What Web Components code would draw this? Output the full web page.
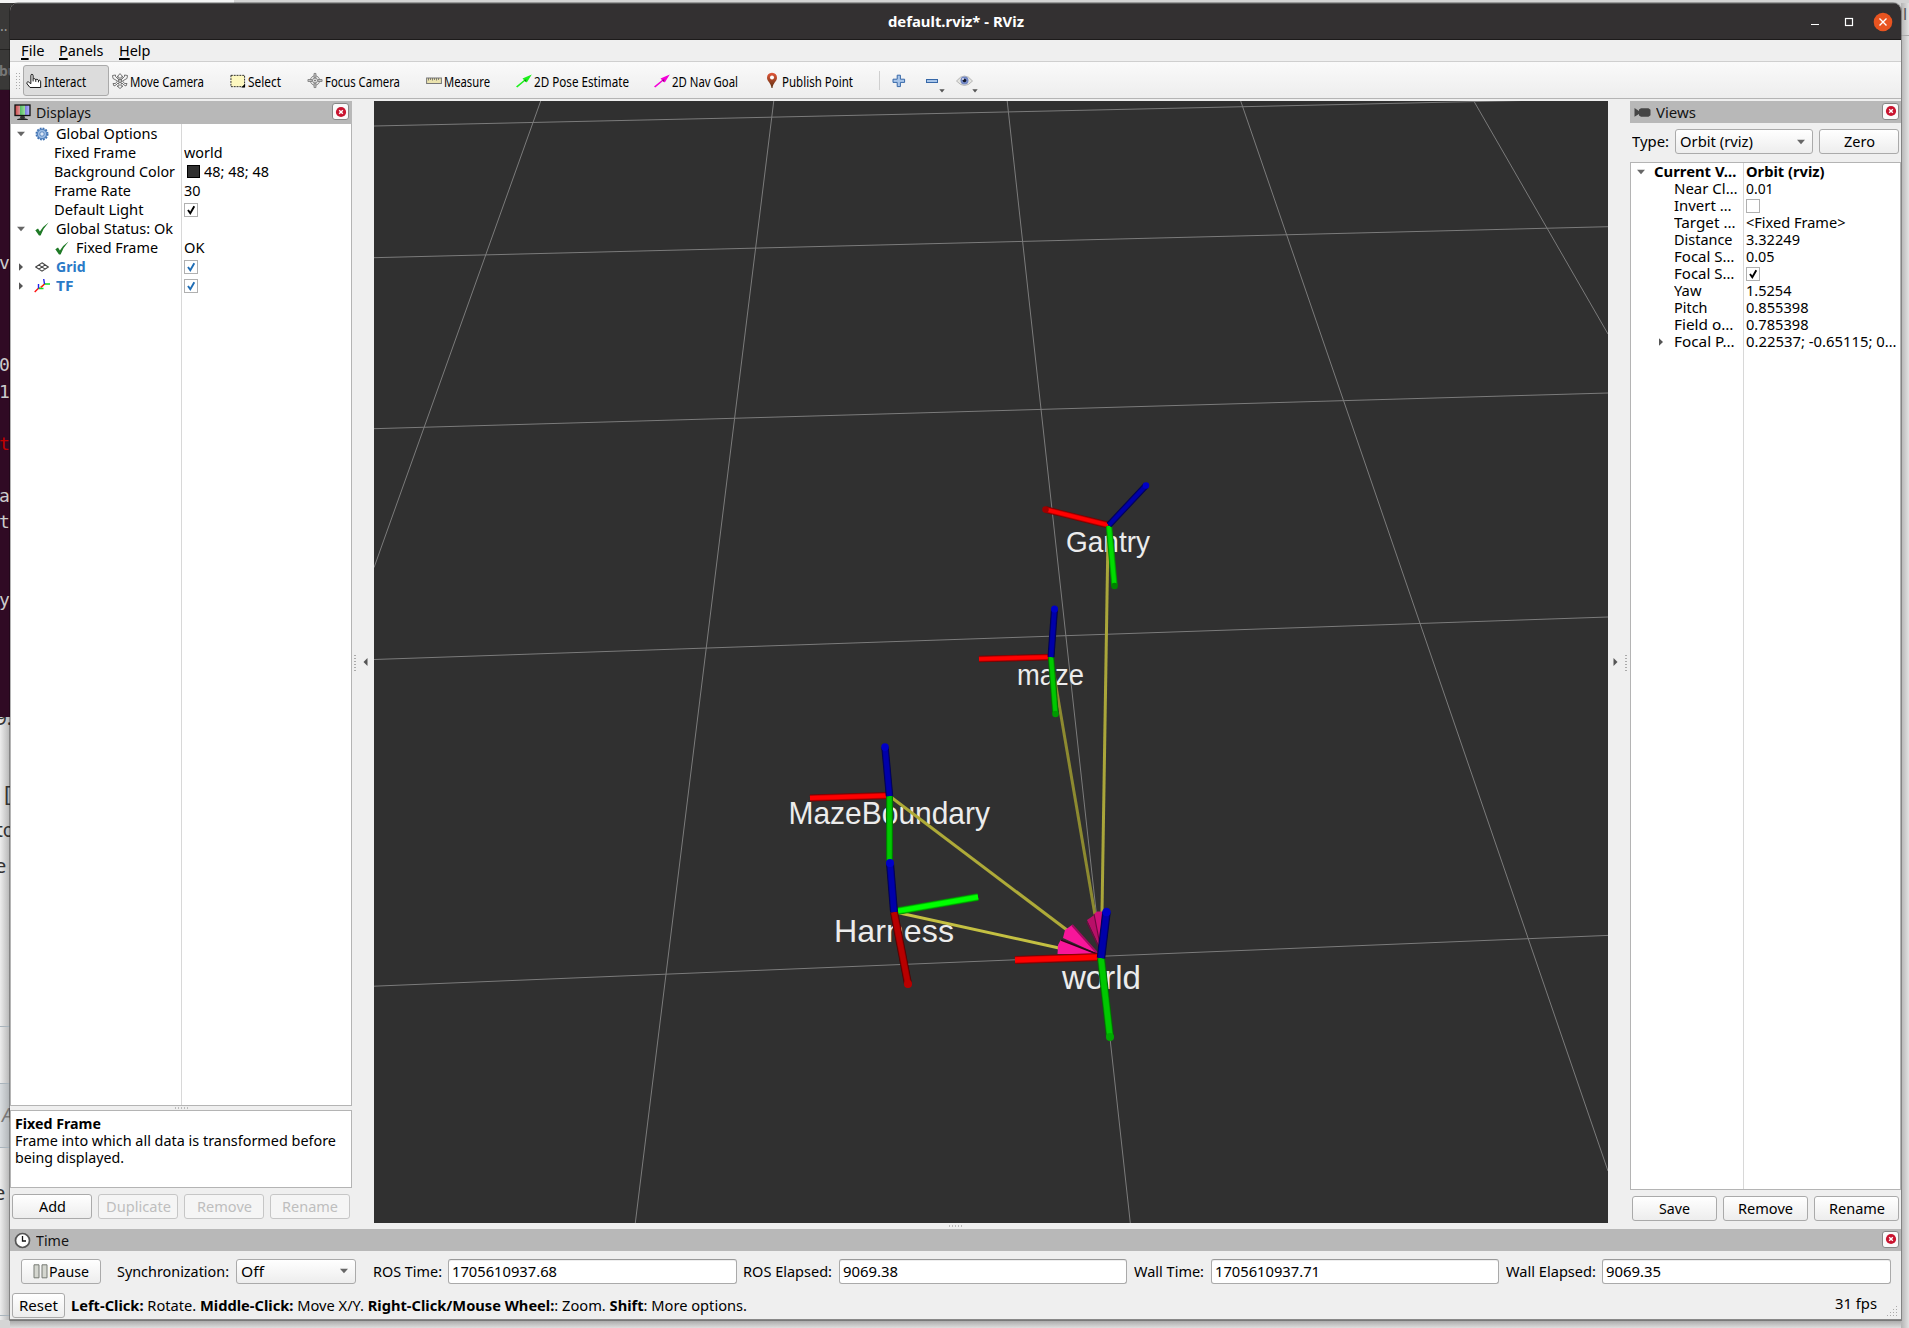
<!DOCTYPE html>
<html lang="en"><head><meta charset="utf-8"><title>default.rviz* - RViz</title>
<style>
html,body{margin:0;height:100%}
body{width:1909px;height:1328px;overflow:hidden;position:relative;font:14.4px/19px "Noto Sans",sans-serif;color:#000;background:#d3d3d3}
</style></head><body>
<desk-backdrop></desk-backdrop>
<rviz-window></rviz-window>
<script>
const ICONS={
hand:`<svg width="18" height="18" viewBox="0 0 18 18"><path d="M5.5 12V3.2Q5.500 1.400 6.700 1.400T8 3.200V7q.3-.8 1.500-.6T11 7.700q.4-.9 1.500-.6T14 8.500q.5-.6 1.500-.3T16.500 9.800V16.300H4.500L1.200 12.200Q.4 10.500 1.700 10.100T3.800 10.800L5.500 12M8 7V9.500M11 7.700V10M14 8.500V10.500" fill="#fff" stroke="#111" stroke-width="1.100" stroke-linejoin="round"/></svg>`,
move:`<svg width="16" height="16" viewBox="0 0 16 16" fill="#f4f4f4" stroke="#666" stroke-width=".9"><path d="M8 .6 11 4H9v3l3.500-3.500V2l3 .5-.5 3-1 .5L10.500 8l2 2.500H15L14 13l-2-1-2-2-1 1v2h2L8 15.500 5 13h2v-2L6 10l-2 2-2 1-1-2.500h2.500L5.500 8 2 6 1 5.500.5 2.500l3-.5v1.500L7 7V4H5z"/><circle cx="8" cy="8" r="1.800" fill="#bbb"/></svg>`,
select:`<svg width="17" height="16" viewBox="0 0 17 16"><rect x="1" y="2" width="14.500" height="12" fill="#fdf8c0" stroke="#222" stroke-dasharray="2 1"/><path d="M16 11v4h-4z" fill="#000"/></svg>`,
focus:`<svg width="17" height="17" viewBox="0 0 17 17" fill="#ccc" stroke="#777" stroke-width=".9"><circle cx="8.500" cy="8.500" r="5" fill="#e8e8e8"/><circle cx="8.500" cy="8.500" r="2.600" fill="#f7f7f7"/><path d="M7.500 1h2v4.500h-2zM7.500 11.500h2V16h-2zM1 7.500h4.500v2H1zM11.500 7.500H16v2h-4.500z"/><circle cx="8.500" cy="8.500" r=".7" fill="#555"/></svg>`,
measure:`<svg width="16" height="8" viewBox="0 0 16 8"><rect x=".6" y="1" width="14.800" height="5.500" fill="#ebe3ae" stroke="#777"/><path d="M2.500 1v2.500M4.500 1v2M6.500 1v2.500M8.500 1v2M10.500 1v2.500M12.500 1v2" stroke="#666" stroke-width=".8"/></svg>`,
pose:`<svg width="16" height="14" viewBox="0 0 16 14"><path d="M15.800.5 6.500 4.500 8 6 0 12.500l1.300 1L9 7l1.800 1.500z" fill="#1df01d"/><path d="m8 6 2.500-.5-.8 2.500z" fill="#078a07"/></svg>`,
nav:`<svg width="16" height="14" viewBox="0 0 16 14"><path d="M15.800.5 6.500 4.500 8 6 0 12.500l1.300 1L9 7l1.800 1.500z" fill="#f400d8"/><path d="m8 6 2.500-.5-.8 2.500z" fill="#8a0077"/></svg>`,
pin:`<svg width="12" height="17" viewBox="0 0 12 17"><defs><linearGradient id="g" x2="0" y2="1"><stop stop-color="#e4573a"/><stop offset="1" stop-color="#5c3010"/></linearGradient></defs><path d="M6 .8Q11 1 11 6c0 3-4 5-4.500 10h-1C5 11 1 9 1 6Q1 1 6 .8z" fill="url(#g)"/><circle cx="6" cy="5.500" r="2" fill="#fff"/></svg>`,
plus:`<svg width="14" height="14" viewBox="0 0 14 14"><path d="M5.200 1.200h3.200v4h4.200v3.200H8.400v4.200H5.200V8.400H1V5.200h4.200z" fill="#a9c6ea" stroke="#3768a8"/></svg>`,
minus:`<svg width="14" height="6" viewBox="0 0 14 6"><rect x="1.500" y="1.500" width="11" height="3" fill="#a9c6ea" stroke="#3768a8"/></svg>`,
eye:`<svg width="17" height="12" viewBox="0 0 17 12"><path d="M.5 6Q8.500-4 16.500 6 8.500 15 .5 6z" fill="#e4e4e0" stroke="#aaa" stroke-width=".8"/><circle cx="8.500" cy="5.500" r="4" fill="#7388c4"/><circle cx="8.500" cy="5.500" r="1.800" fill="#101528"/><circle cx="7" cy="4" r="1" fill="#dde"/></svg>`,
tri:`<svg width="6" height="4" viewBox="0 0 6 4"><path d="M.3.3h5.400L3 3.400z" fill="#555"/></svg>`,
down:`<svg width="10" height="6" viewBox="0 0 10 6"><path d="M1 .8h8L5 5.300z" fill="#666"/></svg>`,
right:`<svg width="10" height="8" viewBox="0 0 10 8"><path d="M3 .3v7.400L7 4z" fill="#555"/></svg>`,
left:`<svg width="5" height="8" viewBox="0 0 5 8"><path d="M4.500 0v8L.5 4z" fill="#555"/></svg>`,
monitor:`<svg width="17" height="17" viewBox="0 0 17 17"><defs><linearGradient id="m"><stop stop-color="#c44"/><stop offset=".33" stop-color="#d99"/><stop offset=".34" stop-color="#5b6"/><stop offset=".66" stop-color="#9d9"/><stop offset=".67" stop-color="#77d"/><stop offset="1" stop-color="#bbf"/></linearGradient></defs><rect x="1" y="1" width="15" height="10.500" fill="url(#m)" stroke="#111" stroke-width="1.300"/><path d="M6.500 12h4l.5 2H6z" fill="#333"/><path d="M3.500 15.500q5-2 10 0z" fill="#222" stroke="#222"/></svg>`,
gear:`<svg width="14" height="14" viewBox="0 0 14 14"><circle cx="7" cy="7" r="5.500" fill="#8cb0dd" stroke="#3f71b1" stroke-width="2" stroke-dasharray="1.700 1.180"/><circle cx="7" cy="7" r="4.600" fill="#9dbce3" stroke="#4779b7" stroke-width=".8"/><circle cx="7" cy="7" r="2.200" fill="#dbe7f6" stroke="#4779b7" stroke-width=".8"/></svg>`,
check:`<svg width="14" height="14" viewBox="0 0 14 14"><path d="M.3 8.300 3 6.600l1.900 3Q8 4 13.600.4q-5.300 5.600-8 13H4z" fill="#1f7a26"/></svg>`,
grid:`<svg width="14" height="10" viewBox="0 0 14 10"><path d="M7 .8 13.300 5 7 9.200.7 5zM3.800 2.900l6.400 4.200M10.200 2.900 3.800 7.100" fill="#fff" stroke="#444" stroke-width="1.100"/></svg>`,
tf:`<svg width="17" height="15" viewBox="0 0 17 15" fill="none" stroke-width="1.400"><path d="M4.500 10.500 11 5.500" stroke="#d8b820" stroke-width="1"/><path d="m.7 14 4-4M7 9.500l4-4" stroke="#f11"/><path d="M4.500 10.500h5M10.500 6H16" stroke="#1d2"/><path d="M4.500 10.500V6M10.500 6l-.8-5" stroke="#22e"/></svg>`,
camera:`<svg width="17" height="9" viewBox="0 0 17 9" fill="#454545"><path d="M.5 0 5 3V1.500L7 .2h7.500l2 1.500v5.600L14.500 8.800H7L5 7.500V6L.5 8.800z"/></svg>`,
clock:`<svg width="17" height="17" viewBox="0 0 17 17"><circle cx="8.500" cy="8.500" r="7" fill="#fff" stroke="#555" stroke-width="1.700"/><path d="M8.500 4v5H12" fill="none" stroke="#111" stroke-width="1.300"/></svg>`,
pause:`<svg width="15" height="15" viewBox="0 0 15 15" fill="#d4d6cf" stroke="#777b74"><path d="M1 .8h5v13H1zM9 .8h5v13H9z"/></svg>`,
x:`<svg width="12" height="12" viewBox="0 0 12 12"><circle cx="6" cy="6" r="5.100" fill="#c9142f"/><path d="m4.200 4.200 3.600 3.600m0-3.600L4.200 7.800" stroke="#fff" stroke-width="1.400"/></svg>`
};
function el(name,html,init){customElements.define(name,class extends HTMLElement{connectedCallback(){
  if(this.shadowRoot)return;
  const r=this.attachShadow({mode:'open'});
  r.innerHTML=typeof html==='function'?html(this):html; if(init)init(this,r);}});}
const F=(t,w)=>`<fit-text w="${w}">${t}</fit-text>`;
const I=n=>`<rv-icon name="${n}"></rv-icon>`;

el('desk-backdrop',`<style>:host{position:absolute;inset:0;display:block}</style>
<svg width="1909" height="1328" viewBox="0 0 1909 1328" font-family="Noto Sans">
<defs><linearGradient id="s"><stop stop-color="#ededed"/><stop offset="1" stop-color="#b5b5b5"/></linearGradient>
<linearGradient id="b" x2="0" y2="1"><stop stop-color="#a4a4a4"/><stop offset="1" stop-color="#dedede"/></linearGradient>
<linearGradient id="r"><stop stop-color="#b4b4b4"/><stop offset="1" stop-color="#e2e2e2"/></linearGradient></defs>
<rect width="234" height="3" fill="#f4f4f4"/>
<rect y="3" width="16" height="87" fill="#3a3938"/><path d="M0 49.500h10M0 90h10" stroke="#242322"/>
<rect y="717" width="10" height="611" fill="url(#s)"/>
<rect y="1084" width="10" height="64" fill="#9fb0bd" opacity=".25"/>
<path d="M0 1026.500h10M0 1083.500h10M0 1147.500h10M0 1315.500h10" stroke="#a9b4bc"/>
<text x="-4" y="725" font-size="19" fill="#333">9:</text>
<rect y="90" width="10" height="627" fill="#300a24"/>
<rect x="10" y="1320" width="1891" height="8" fill="url(#b)"/><rect y="1320" width="10" height="8" fill="#d5d5d5"/>
<rect x="1901" y="3" width="8" height="1325" fill="url(#r)"/><path d="M1901 35.500h8" stroke="#aaa"/>
<g font-size="16"><text x="0" y="31" fill="#999" font-size="14">..</text><text x="-1" y="76" fill="#777" font-weight="700" font-size="14">bu</text>
<g fill="#ccc" font-family="DejaVu Sans Mono" font-size="18"><text x="-1" y="269">v</text><text x="-1" y="371">0</text><text x="-1" y="398">1</text><text x="-1" y="450" fill="#c00000">t</text><text x="-1" y="502">a</text><text x="-1" y="528">t</text><text x="-1" y="606">y</text></g>
<g fill="#333" font-size="20"><text x="4" y="802" font-size="21">[</text><text x="-4" y="837" font-size="19">to</text><text x="-5" y="873">e</text><text x="2" y="1122" font-style="italic" fill="#777" font-size="19">A</text><text x="-6" y="1200">e</text></g>
<text x="1903" y="20" fill="#555">l</text></g>
</svg>`);

el('rv-icon',e=>`<style>:host{display:flex}svg{display:block}</style>${ICONS[e.getAttribute('name')]}`);

el('rviz-window',`<style>
:host{display:flex;flex-direction:column;position:relative;box-sizing:border-box;width:1891px;height:1317px;margin:3px 0 0 10px;background:#efefef;border-radius:8px 8px 0 0;overflow:hidden;box-shadow:0 0 0 1px rgba(0,0,0,.28)}
main{display:flex;height:1122px;margin-top:2px}
</style><title-bar></title-bar><menu-bar></menu-bar><tool-bar></tool-bar>
<main><displays-panel></displays-panel><side-grip></side-grip><scene-view></scene-view><side-grip flip></side-grip><views-panel></views-panel></main>
<h-grip style="height:6px"></h-grip><time-panel></time-panel><status-bar></status-bar>`);

el('title-bar',`<style>:host{display:grid;grid-template-columns:1fr auto 1fr;align-items:center;height:37px;background:#333031;border-top:1px solid #555;border-bottom:1px solid #1c1a1a;box-sizing:border-box;color:#fff;font-weight:700}
.c{display:flex;justify-self:end;align-items:center;padding-right:8px}svg{display:block}</style>
<span></span>${F('default.rviz* - RViz',136)}<div class="c"><svg width="84" height="20" viewBox="0 0 84 20"><path d="M2 12.500h8" stroke="#fff"/><rect x="36.500" y="6.500" width="7" height="7" fill="none" stroke="#fff" stroke-width="1.200"/><circle cx="74" cy="10" r="9.300" fill="#e95420"/><path d="m70.500 6.500 7 7m0-7-7 7" stroke="#fff" stroke-width="1.400"/></svg></div>`);

el('menu-bar',`<style>:host{display:flex;height:21px;padding-left:10.500px;gap:15px;border-bottom:1px solid #cfcfcf;align-items:center}u{text-underline-offset:2px;text-decoration-thickness:1.500px}</style>
${F('<u>F</u>ile',23.5)}${F('<u>P</u>anels',44.5)}${F('<u>H</u>elp',31.5)}`);

el('rv-tool',e=>`<style>:host{display:flex;align-items:center;box-sizing:border-box;height:31px;gap:2px;flex:none;font-size:13.600px}:host([on]){background:#dcdcdc;border:1px solid #aaa;border-radius:3px}
rv-icon{width:16px;justify-content:center;margin-left:3px}:host([on]) rv-icon{margin-left:2px}::slotted(fit-text){position:relative;top:.5px}</style>${I(e.getAttribute('icon'))}<slot></slot>`);
const T=(i,t,w,W,on='')=>`<rv-tool icon="${i}" style="width:${W}px" ${on}>${F(t,w)}</rv-tool>`;
el('tool-bar',`<style>:host{display:flex;height:37px;box-sizing:border-box;align-items:center;background:linear-gradient(#fafafa,#ededed);border-bottom:1px solid #b4b4b4;padding-top:1px}
.h{width:5px;height:17px;margin:0 3px 0 5px;background:radial-gradient(circle,#aaa .7px,transparent 1px) 0 0/3px 3px}
.sep{width:1px;height:19px;background:#cfcfcf;margin:0 12px 0 1px}.m{display:flex;align-items:center;width:33px}.m i{padding:21px 0 0 0}.m i.e{margin-left:-1px}</style><i class="h"></i>
${T('hand','Interact',42,86,'on')}${T('move','Move Camera',74,118)}${T('select','Select',33,77)}${T('focus','Focus Camera',75,119)}${T('measure','Measure',46,90)}${T('pose','2D Pose Estimate',95,138)}${T('nav','2D Nav Goal',66,110)}${T('pin','Publish Point',71,117)}
<i class="sep"></i><span class="m">${I('plus')}</span><span class="m">${I('minus')}<i>${I('tri')}</i></span><span class="m" style="margin-left:-2px">${I('eye')}<i class="e">${I('tri')}</i></span>`);

el('panel-head',e=>`<style>:host{display:flex;align-items:center;height:22px;background:#b8b8b8;padding:0 2px 0 3.500px;box-sizing:border-box;color:#141414;flex:none}
::slotted(fit-text){margin-left:5.500px}.x{margin-left:auto;width:15px;height:15px;border:1px solid #888;border-radius:3px;background:#fafafa;display:flex;align-items:center;justify-content:center;margin-bottom:2px}</style>${I(e.getAttribute('icon'))}<slot></slot><span class="x">${I('x')}</span>`);

el('side-grip',e=>`<style>:host{display:flex;flex:none;width:22px;align-items:center;justify-content:flex-end;box-sizing:border-box;padding-right:6px;gap:7px}:host([flip]){flex-direction:row-reverse;padding:0 0 0 5px}:host([flip]) rv-icon{transform:scaleX(-1)}i{width:2px;height:17px;background:radial-gradient(circle,#aaa .7px,transparent 1px) 0 0/2px 3px}:host([flip]){justify-content:flex-end}</style><i></i>${I('left')}`);
el('h-grip',`<style>:host{display:flex;justify-content:center;align-items:center;flex:none}i{width:15px;height:2px;background:radial-gradient(circle,#bbb .6px,transparent 1px) 0 0/3px 2px}</style><i></i>`);

el('rv-check',e=>`<style>:host{display:flex}svg{display:block}</style><svg width="14" height="14" viewBox="0 0 14 14"><rect x=".5" y=".5" width="13" height="13" fill="#fff" stroke="#b0b0b0"/>${e.hasAttribute('on')?`<path d="M4 7 6.300 10.300 10.300 3.300" fill="none" stroke="${e.getAttribute('on')||'#000'}" stroke-width="1.900"/>`:''}</svg>`);

el('tree-view',e=>`<style>:host{display:flex;flex-direction:column;box-sizing:border-box;border:1px solid #b4b4b4;background:linear-gradient(#d8d8d8,#d8d8d8) var(--col) 0/1px 100% no-repeat #fff;overflow:hidden}</style><slot></slot>`);
el('tree-row',e=>`<style>:host{display:flex;height:var(--row);line-height:var(--row);flex:none}
.n{width:var(--col);padding-left:var(--p);box-sizing:border-box;display:flex;align-items:center}.v{display:flex;align-items:center;padding-left:2.500px;gap:5px}</style><div class="n"><slot></slot></div><div class="v"><slot name="v"></slot></div>`);
const R=(p,n,v='')=>`<tree-row style="--p:${p}px">${n}<span slot="v" style="display:flex;align-items:center;gap:4px">${v}</span></tree-row>`;
const G=w=>`<i style="width:${w}px;flex:none"></i>`;

el('rv-button',`<style>:host{display:flex;align-items:center;justify-content:center;box-sizing:border-box;height:25px;border:1px solid #aaa;border-radius:3px;background:linear-gradient(#fff,#ededed)}:host([off]){color:#bebebe;border-color:#c6c6c6;background:#f5f5f5}</style><slot></slot>`);
el('rv-combo',`<style>:host{display:flex;align-items:center;justify-content:space-between;box-sizing:border-box;height:25px;border:1px solid #aaa;border-radius:3px;background:linear-gradient(#fff,#ededed);padding:0 6px 0 4px}</style><slot></slot>${I('down')}`);
el('rv-field',`<style>:host{display:flex;align-items:center;box-sizing:border-box;height:25px;border:1px solid #aaa;border-top-color:#999;border-radius:3px;background:#fff;padding-left:3px;box-shadow:inset 0 1px #eee}</style><slot></slot>`);

const B=' style="color:#2a7ac7;font-weight:700"';
el('displays-panel',`<style>:host{display:flex;flex-direction:column;width:342px;flex:none}
panel-head{height:23px;padding-right:3px}tree-view{height:982px;border-top:0;--col:170px;--row:19px}
.d{height:78px;box-sizing:border-box;border:1px solid #b4b4b4;background:#fff;padding:4px 0 0 4px;line-height:17px;flex:none}.d fit-text{display:block}
.b{display:flex;gap:6px;padding:6px 2px 0}.b>*{flex:1}.sw{width:11px;height:11px;background:#303030;border:1px solid #000;margin-left:3px}</style>
<panel-head icon="monitor">${F('Displays',55)}</panel-head><tree-view>
${R(5,I('down')+G(8.5)+I('gear')+G(7.5)+F('Global Options',101.5))}
${R(43,F('Fixed Frame',82),F('world',38.5))}
${R(43,F('Background Color',121),'<i class="sw"></i>'+F('48; 48; 48',65))}
${R(43,F('Frame Rate',77),F('30',16.5))}
${R(43,F('Default Light',89.5),'<rv-check on></rv-check>')}
${R(5,I('down')+G(8.5)+I('check')+G(7.5)+F('Global Status: Ok',117))}
${R(43.5,I('check')+G(7.5)+F('Fixed Frame',82),F('OK',20.5))}
${R(5,I('right')+G(8.5)+I('grid')+G(7.5)+`<span${B}>${F('Grid',29.5)}</span>`,'<rv-check on="#1f6db5"></rv-check>')}
${R(5,I('right')+G(7.5)+I('tf')+G(5.5)+`<span${B}>${F('TF',17.5)}</span>`,'<rv-check on="#1f6db5"></rv-check>')}
</tree-view><h-grip style="height:4px"></h-grip>
<div class="d"><b>${F('Fixed Frame',86)}</b>${F('Frame into which all data is transformed before',321)}${F('being displayed.',109)}</div>
<div class="b"><rv-button>${F('Add',27)}</rv-button><rv-button off>${F('Duplicate',65)}</rv-button><rv-button off>${F('Remove',55)}</rv-button><rv-button off>${F('Rename',56)}</rv-button></div>`);

el('views-panel',`<style>:host{display:flex;flex-direction:column;width:271px;flex:none}
.t{display:flex;align-items:center;height:39px;padding:0 2px 2px;gap:6px;box-sizing:border-box}tree-view{height:1028px;--col:112px;--row:17px;width:271px}
.b{display:flex;gap:6px;padding:6px 2px 0}.b>*{flex:1}</style>
<panel-head icon="camera">${F('Views',40)}</panel-head>
<div class="t">${F('Type:',37)}<rv-combo style="width:138px">${F('Orbit (rviz)',73)}</rv-combo><rv-button style="width:80px">${F('Zero',31)}</rv-button></div>
<tree-view>${R(5,I('down')+G(8)+`<b>${F('Current V…',82.5)}</b>`,`<b>${F('Orbit (rviz)',78.5)}</b>`)}
${R(42.5,F('Near Cl…',63.5),F('0.01',27.5))}
${R(42.5,F('Invert …',57.5),'<rv-check></rv-check>')}
${R(42.5,F('Target …',61.5),F('&lt;Fixed Frame&gt;',99.5))}
${R(42.5,F('Distance',58.5),F('3.32249',54))}
${R(42.5,F('Focal S…',60.5),F('0.05',28.5))}
${R(42.5,F('Focal S…',60.5),'<rv-check on></rv-check>')}
${R(42.5,F('Yaw',27.5),F('1.5254',45.5))}
${R(42.5,F('Pitch',33.5),F('0.855398',62.5))}
${R(42.5,F('Field o…',59.5),F('0.785398',62.5))}
${R(24.5,I('right')+G(8)+F('Focal P…',60.5),F('0.22537; -0.65115; 0…',150.5))}
</tree-view><div class="b"><rv-button>${F('Save',31)}</rv-button><rv-button>${F('Remove',55)}</rv-button><rv-button>${F('Rename',56)}</rv-button></div>`);

el('time-panel',`<style>:host{display:block}.r{display:flex;align-items:center;height:40px;padding:0 11px;gap:6.600px}.r>*{flex:none}rv-field{width:288.500px}</style>
<panel-head icon="clock">${F('Time',33)}</panel-head><div class="r">
<rv-button style="width:80px;margin-right:9.400px">${I('pause')}${G(1)}${F('Pause',40)}</rv-button>${F('Synchronization:',112)}<rv-combo style="width:120px;margin-right:10.500px">${F('Off',23)}</rv-combo>
${F('ROS Time:',69)}<rv-field>${F('1705610937.68',105)}</rv-field>${F('ROS Elapsed:',89)}<rv-field>${F('9069.38',55)}</rv-field>${F('Wall Time:',70)}<rv-field>${F('1705610937.71',105)}</rv-field>${F('Wall Elapsed:',90)}<rv-field>${F('9069.35',55)}</rv-field></div>`);

el('status-bar',`<style>:host{display:flex;align-items:center;height:29px;box-sizing:border-box;padding:1px 2px 0;gap:6px;position:relative;border-bottom:1px solid #888}.f{margin-left:auto;padding:0 22px 5px 0}.g{position:absolute;right:2px;bottom:1px}</style>
<rv-button style="width:53px">${F('Reset',39)}</rv-button>${F('<b>Left-Click:</b> Rotate. <b>Middle-Click:</b> Move X/Y. <b>Right-Click/Mouse Wheel:</b>: Zoom. <b>Shift</b>: More options.',676)}<span class="f">${F('31 fps',42)}</span>
<svg class="g" width="12" height="12" fill="#aaa"><path d="M9 0h1v1H9zM9 3h1v1H9zM6 3h1v1H6zM9 6h1v1H9zM6 6h1v1H6zM3 6h1v1H3zM9 9h1v1H9zM6 9h1v1H6zM3 9h1v1H3zM0 9h1v1H0z"/></svg>`);

// Shaded rod: dark edge, body colour and a narrow lighter core.
const rod=(x1,y1,x2,y2,c,w=7,e='')=>{const k={r:['#7a0000','#c00000','#ff0000'],d:['#500000','#8d0000','#b80000'],g:['#006800','#00a000','#00c800'],l:['#008a00','#00c800','#00ff00'],m:['#008a00','#00b400','#00dc00'],b:['#000050','#00007d','#0000aa']}[c];
return `<path d="M${x1} ${y1}L${x2} ${y2}" stroke="${k[0]}" stroke-width="${w}"/><path d="M${x1} ${y1}L${x2} ${y2}" stroke="${k[1]}" stroke-width="${w-1.4}"/><path d="M${x1} ${y1}L${x2} ${y2}" stroke="${k[2]}" stroke-width="${w-2.8}"/>`+(e?`<circle cx="${x1}" cy="${y1}" r="${w/2}" fill="${e}"/>`:'')};
const L=(t,x,y,w,s)=>`<text x="${x}" y="${y}" textLength="${w}" lengthAdjust="spacingAndGlyphs" font-size="${s}">${t}</text>`;
el('scene-view',`<style>:host{display:block;width:1234px;height:1122px;flex:none;background:#303030}svg{display:block}</style>
<svg width="1234" height="1122" viewBox="374 101 1234 1122" fill="none">
<path d="M374 126 1608 98.600M374 257.700 1608 226.700M374 428.700 1608 393M374 659.500 1608 617M374 986.200 1608 935.400M540.700 101 374 567.600M773.750 101 635.300 1223M1007.200 101 1130.300 1223M1240.700 101 1608 1171M1473.800 101 1608 334" stroke="#7b7b7b" stroke-width="1"/>
<g fill="#ececec" font-family="Liberation Sans">${L('Gantry',1066,552,84,29)}${L('maze',1017,684.5,67,29.5)}${L('MazeBoundary',788.500,824,201.5,30.5)}${L('Harness',834,942,120,32)}${L('world',1062,988.5,79,33)}</g>
<g stroke-width="3"><path d="M1051 657 1095 915" stroke="#8d8a30"/><path d="M1108 535 1102 912" stroke="#aaa63a"/><path d="M889.500 796 1067 930" stroke="#aeaa38"/><path d="M895 912 1059 948" stroke="#c4c042"/></g>
<path d="M1087 920 1095 914.500 1101 950z" fill="#b80f68"/><path d="M1094 914 1097 911.500 1102 911.500 1101 950z" fill="#cf1178"/><path d="M1094 914 1101 950M1087 922 1100 950" stroke="#700840" stroke-width="1.200"/>
<path d="M1072 925 1065 930 1063 938 1098 954z" fill="#f8169a"/><path d="M1072 925 1098 954" stroke="#a00c60" stroke-width="2"/>
<path d="M1061 939.500 1058 945 1057.500 954 1098 955z" fill="#f8169a"/><path d="M1061 940 1097 954" stroke="#300618" stroke-width="1.500"/>
${rod(810,798,889,795.5,'r')}${rod(889.5,796,889.5,861,'g')}${rod(885,747,889.5,796,'b',7.5,'#0000c8')}
${rod(898,911,978,897,'l',7.5)}${rod(908,984,894,912,'d',8,'#b80000')}${rod(890,863,894,912,'b',8,'#0000c8')}
${rod(1015,960,1100,957,'r',8)}${rod(1110,1037,1101,958,'g',8,'#00a800')}${rod(1106.5,912,1101,958,'b',8.5,'#0000c8')}
${rod(979,659,1051,657,'r',6.5)}${rod(1055.5,714,1051,657,'g',6.5,'#009a00')}${rod(1054.5,609,1051,657,'b',7,'#0000c8')}
${rod(1045.5,509.5,1108,525,'r',6.5,'#a00000')}${rod(1114.5,586,1109,526,'m',6.5,'#008200')}${rod(1146,485.5,1109,525,'b',6.5,'#0000c8')}
</svg>`);

// Squeezes or stretches its line of text to the width given in px.
el('fit-text',`<style>:host{display:inline-block;white-space:nowrap;flex:none}span{display:inline-block;transform-origin:0 50%}</style><span><slot></slot></span>`,(e,r)=>{
const s=r.querySelector('span'),w=+e.getAttribute('w'),n=s.getBoundingClientRect().width;e.style.width=w+'px';s.style.transform=`scaleX(${w/n})`;s.style.marginRight=(w-n)+'px';});
</script></body></html>
